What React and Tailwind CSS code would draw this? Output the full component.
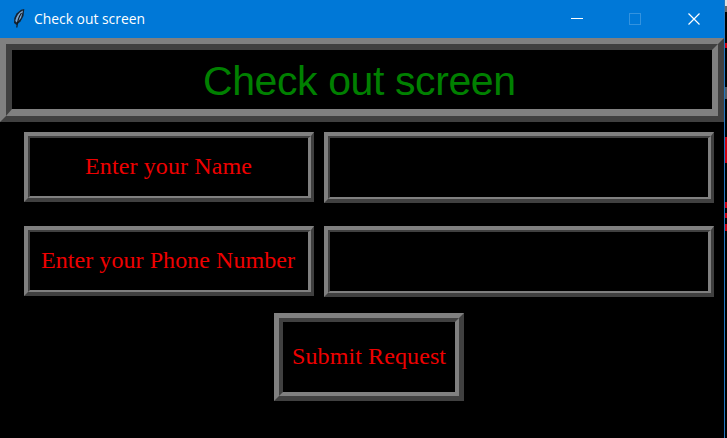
import React from "react";

function Ridge({ size, outer, inner, children }) {
  return (
    <div className={`flex border-t-[#808080] border-l-[#808080] border-r-[#404040] border-b-[#404040] ${size} ${outer}`}>
      <div className={`flex flex-1 items-center justify-center overflow-hidden whitespace-nowrap border-t-[#404040] border-l-[#404040] border-r-[#808080] border-b-[#808080] ${inner}`}>
        {children}
      </div>
    </div>
  );
}

function Caption({ width, x = "-1", children }) {
  return (
    <svg className="h-8 overflow-visible" width={width} height="32">
      <text x={x} y="23" textLength={width} fill="#ee0000" className="font-['Liberation_Serif',serif] text-[24px]">
        {children}
      </text>
    </svg>
  );
}

function Feather() {
  return (
    <svg width="13" height="20" viewBox="0 0 13 20" className="shrink-0">
      <path d="M12.300 0L9 0.800L4.500 4.500L2.300 9L2 14L4.500 16L8.500 12.500L11.500 7Z" fill="#142333" />
      <path d="M11 1.500C7.500 3 4.500 6.500 3.300 12L5 13.500L9 9Z" fill="#7fa6cf" />
      <path d="M9.500 4C7.300 7 5.400 11 4.800 18.500" fill="none" stroke="#101820" strokeWidth="1.200" />
    </svg>
  );
}

function TitleBar() {
  return (
    <header className="flex h-[38px] items-center bg-[#0078d7] pl-3">
      <Feather />
      <h1 className="ml-[9px] flex-1 text-white">
        <svg width="112" height="20" className="block overflow-visible">
          <text x="0" y="15" textLength="111" lengthAdjust="spacingAndGlyphs" fill="white" className="font-['Open_Sans',sans-serif] text-[15px]">
            Check out screen
          </text>
        </svg>
      </h1>
      <svg width="160" height="38" className="shrink-0">
        <path d="M7 18.500h12" stroke="white" />
        <rect x="65.500" y="13.500" width="11" height="11" fill="none" stroke="#3393df" />
        <path d="M124.500 13.500l11 11m0-11l-11 11" stroke="white" strokeWidth="1.2" />
      </svg>
    </header>
  );
}

const row = {
  label: "h-[70px] w-[290px]",
  entry: "h-[71px] w-[390px]",
  outer: "border-t-[4px] border-l-[4px] border-r-[3px] border-b-[4px]",
  inner: "border-t-[2px] border-l-[2px] border-r-[3px] border-b-[2px]",
};

export default function App() {
  return (
    <div className="flex h-[438px] w-[727px] overflow-hidden bg-black">
      <main className="flex w-[724px] shrink-0 flex-col">
        <TitleBar />
        <Ridge size="h-[84px] w-full" outer="border-[6px]" inner="border-t-[6px] border-l-[6px] border-r-[6px] border-b-[7px]">
          <svg width="317" height="50" className="overflow-visible">
            <text x="-1" y="40" textLength="313" fill="#008000" className="font-['Liberation_Sans',sans-serif] text-[41px]">
              Check out screen
            </text>
          </svg>
        </Ridge>
        <section className="mt-[10px] flex gap-[10px] pl-6">
          <Ridge size={row.label} outer={row.outer} inner={row.inner}>
            <Caption width="167">Enter your Name</Caption>
          </Ridge>
          <Ridge size={row.entry} outer={row.outer} inner={row.inner} />
        </section>
        <section className="mt-[23px] flex gap-[10px] pl-6">
          <Ridge size={row.label} outer={row.outer} inner={row.inner}>
            <Caption width="254">Enter your Phone Number</Caption>
          </Ridge>
          <Ridge size={row.entry} outer={row.outer} inner={row.inner} />
        </section>
        <section className="mt-4 pl-[274px]">
          <Ridge size="h-[88px] w-[190px]" outer="border-[5px]" inner="border-[4px]">
            <Caption width="154" x="0">Submit Request</Caption>
          </Ridge>
        </section>
      </main>
      <div className="w-px bg-[#2478c0]" />
      <aside className="flex w-[2px] flex-col bg-black">
        <div className="h-[6px] bg-[#e0e0e0]" />
        <div className="h-[6px] bg-[#666666]" />
        <div className="mt-[31px] h-[5px] bg-[#cc0010]" />
        <div className="mt-[39px] h-[12px] bg-[#505860]" />
        <div className="mt-[38px] h-[26px] bg-[#cc0010]" />
        <div className="mt-[39px] h-[6px] bg-[#cc0010]" />
        <div className="mt-[5px] h-[5px] bg-[#cc0010]" />
        <div className="mt-[6px] h-[7px] bg-[#cc0010]" />
      </aside>
    </div>
  );
}
